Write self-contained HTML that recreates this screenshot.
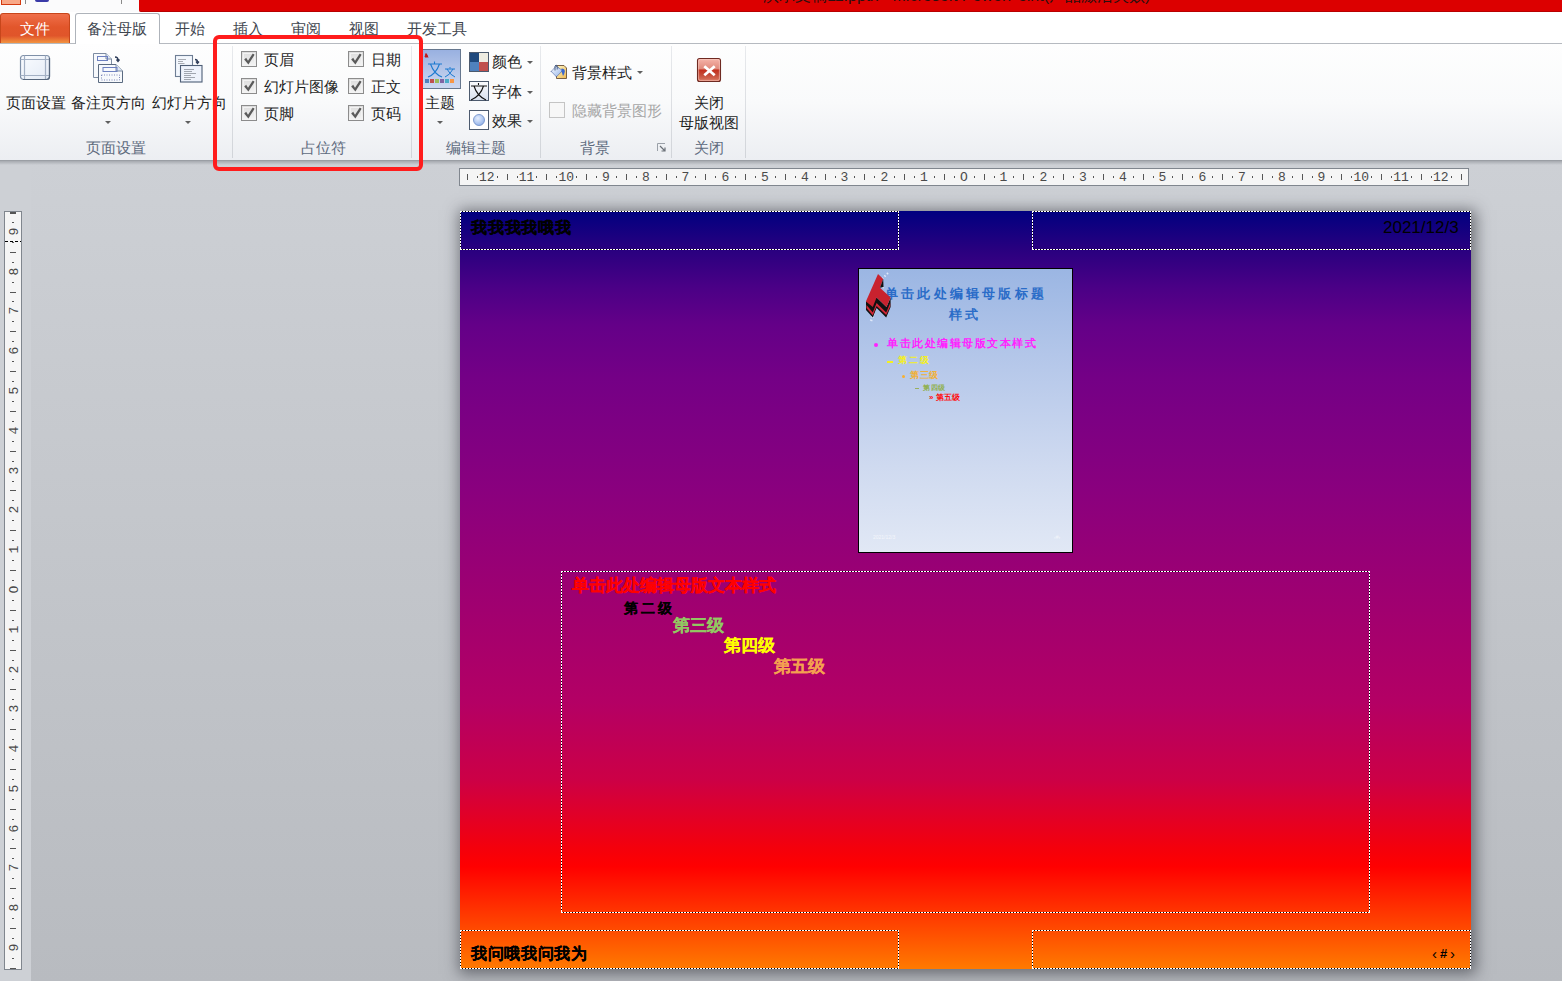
<!DOCTYPE html>
<html><head><meta charset="utf-8">
<style>
*{margin:0;padding:0;box-sizing:border-box}
html,body{width:1562px;height:981px;overflow:hidden;background:#cdd0d5;font-family:"Liberation Sans",sans-serif;}
.a{position:absolute}
#titlebar{left:0;top:0;width:1562px;height:12px;background:#fbfbfc}
#redbar{left:139px;top:0;width:1423px;height:12px;background:#dc0000;border-bottom-left-radius:2px;border-bottom:1px solid #b80000;overflow:hidden}
#ttl{position:absolute;left:624px;top:-13px;font-size:16px;color:#2a1010;white-space:nowrap;line-height:18px}
#tabs{left:0;top:12px;width:1562px;height:32px;background:#fff;border-bottom:1px solid #b6bac0}
.tab{position:absolute;top:20px;font-size:15px;color:#40454e;line-height:17px;white-space:nowrap}
#filebtn{left:0;top:13px;width:70px;height:30px;border:1px solid #c7461b;border-bottom:none;border-radius:3px 3px 0 0;background:linear-gradient(#ef6f4a 0%,#e2562b 45%,#e0552a 75%,#f39441 100%);color:#fff;font-size:15px;text-align:center;line-height:30px}
#seltab{left:75px;top:13px;width:85px;height:32px;border:1px solid #aeb3ba;border-bottom:none;border-radius:3px 3px 0 0;background:#fff}
#ribbon{left:0;top:44px;width:1562px;height:116px;background:linear-gradient(#fefefe 0%,#f9fafb 50%,#eceef2 100%);}
#ribbonline{left:0;top:160px;width:1562px;height:1px;background:#9a9ea4}
#ribbonshadow{left:0;top:161px;width:1562px;height:4px;background:linear-gradient(rgba(140,144,150,0.6),rgba(205,208,213,0))}
.sep{position:absolute;top:46px;width:1px;height:112px;background:linear-gradient(#e8eaed,#d1d4d9)}
.glabel{position:absolute;top:139px;font-size:15px;color:#5e6b7e;line-height:17px;white-space:nowrap}
.rl{position:absolute;font-size:15px;color:#1e1e1e;line-height:17px;white-space:nowrap}
.dis{color:#a6a6a6}
.cb{position:absolute;width:16px;height:16px;border:1px solid #8c8c8c;background:linear-gradient(#dcdcdc,#f4f4f4)}
.cb::before{content:"";position:absolute;left:1px;top:1px;right:1px;bottom:1px;border:1px solid #f2f2f2}
.arr{position:absolute;width:0;height:0;border-left:3px solid transparent;border-right:3px solid transparent;border-top:3px solid #5f5f5f}
#redbox{left:213px;top:35px;width:210px;height:136px;border:4px solid #ff1c1c;border-radius:6px}
#ws2{left:31px;top:161px;width:1531px;height:820px;background:linear-gradient(#cdd0d5,#b8bbc0)}
/* rulers */
#hruler{left:459px;top:168px;width:1010px;height:18px;border:1px solid #80868e;background:#f5f5f5}
#vruler{left:4px;top:211px;width:18px;height:759px;border:1px solid #80868e;background:#f5f5f5}
.rn{position:absolute;font-family:"Liberation Mono",monospace;font-size:13px;color:#4a4a4a;line-height:13px;}
.vrn{transform:rotate(-90deg)}
.tk{background:#555}
/* slide */
#slide{left:460px;top:211px;width:1011px;height:758px;box-shadow:2px 2px 14px 3px rgba(50,52,60,0.6);
background:linear-gradient(#000080 0%,#28007f 5%,#4a0086 10%,#640088 15%,#740086 22%,#8a007e 37%,#a00070 52%,#b40064 65%,#cc0046 75%,#f4000c 84%,#ff0000 86.5%,#ff3a00 93%,#ff7a00 100%)}
.ph{position:absolute}
.ph svg{position:absolute;left:0;top:0;overflow:visible}
.dbox{position:absolute;background:repeating-linear-gradient(90deg,#fff 0 2px,#000 2px 3px) top/100% 1px no-repeat,repeating-linear-gradient(90deg,#fff 0 2px,#000 2px 3px) bottom/100% 1px no-repeat,repeating-linear-gradient(180deg,#fff 0 2px,#000 2px 3px) left/1px 100% no-repeat,repeating-linear-gradient(180deg,#fff 0 2px,#000 2px 3px) right/1px 100% no-repeat}
.tt{position:absolute;white-space:nowrap;line-height:1}
.stx{position:absolute;white-space:nowrap;font-weight:bold;line-height:20px;-webkit-text-stroke:0.3px currentColor}
</style></head><body>
<div id="ws2" class="a"></div>
<div id="titlebar" class="a"></div>
<div id="redbar" class="a"><div id="ttl">演示文稿11.pptx - Microsoft PowerPoint(产品激活失败)</div></div>
<!-- QAT -->
<div class="a" style="left:1px;top:0;width:20px;height:5px;background:#f8a888;border:1px solid #d43a10;border-top:none"></div>
<div class="a" style="left:25px;top:0;width:1px;height:4px;background:#8a8a8a"></div>
<div class="a" style="left:35px;top:0;width:14px;height:2px;background:#3a3aa8;border-radius:0 0 2px 2px"></div>
<div class="a" style="left:121px;top:0;width:1px;height:4px;background:#8a8a8a"></div>

<div id="tabs" class="a"></div>
<div id="filebtn" class="a">文件</div>
<div id="seltab" class="a"></div>
<div class="tab" style="left:87px">备注母版</div>
<div class="tab" style="left:175px">开始</div>
<div class="tab" style="left:233px">插入</div>
<div class="tab" style="left:291px">审阅</div>
<div class="tab" style="left:349px">视图</div>
<div class="tab" style="left:407px">开发工具</div>
<div id="ribbon" class="a"></div>
<div id="ribbonline" class="a"></div>
<div id="ribbonshadow" class="a"></div>

<div class="sep" style="left:232px"></div>
<div class="sep" style="left:411px"></div>
<div class="sep" style="left:540px"></div>
<div class="sep" style="left:671px"></div>
<div class="sep" style="left:745px"></div>

<div class="glabel" style="left:86px">页面设置</div>
<div class="glabel" style="left:301px">占位符</div>
<div class="glabel" style="left:446px">编辑主题</div>
<div class="glabel" style="left:580px">背景</div>
<div class="glabel" style="left:694px">关闭</div>

<!-- page setup group -->
<svg class="a" style="left:18px;top:53px" width="36" height="30" viewBox="0 0 36 30">
 <defs><linearGradient id="g1" x1="0" y1="0" x2="1" y2="1"><stop offset="0" stop-color="#fafcff"/><stop offset="1" stop-color="#e4ebf6"/></linearGradient></defs>
 <rect x="2.5" y="2.5" width="29" height="24" rx="3" fill="url(#g1)" stroke="#7f90a8" stroke-width="1.2"/>
 <path d="M6.5 2.5V26.5M27.5 2.5V26.5M2.5 6.5H31.5M2.5 22.5H31.5" stroke="#a3b0c4" stroke-width="1.2"/>
 <path d="M31.5 5V23.5Q31.5 26.5 28.5 26.5H5" stroke="#56667c" stroke-width="1.2" fill="none"/>
</svg>
<svg class="a" style="left:90px;top:50px" width="36" height="36" viewBox="0 0 36 36">
 <path d="M3.5 3.5H16L21.5 9V27.5H3.5Z" fill="#f7f9fc" stroke="#7d8ca2"/>
 <path d="M16 3.5V9H21.5" fill="#dfe8f6" stroke="#7d8ca2"/>
 <rect x="7.5" y="6.5" width="10" height="4" fill="none" stroke="#6d80c0"/>
 <path d="M25 7Q28 7 28 10M26.5 9.5L28 11.5L29.5 9.5" stroke="#2d3c58" stroke-width="1.3" fill="none"/>
 <path d="M8.5 14.5H26L32.5 21V32.5H8.5Z" fill="#f7f9fc" stroke="#5a6a80"/>
 <path d="M26 14.5V21H32.5" fill="#dfe8f6" stroke="#7d8ca2"/>
 <rect x="13" y="17.5" width="14" height="4" fill="none" stroke="#6d80c0"/>
 <rect x="11.5" y="25" width="18" height="5" fill="none" stroke="#7a86b8" stroke-dasharray="1 1.5"/>
</svg>
<svg class="a" style="left:172px;top:52px" width="34" height="34" viewBox="0 0 34 34">
 <rect x="3.5" y="3.5" width="17" height="21" fill="#f3f7fd" stroke="#6e7e94" stroke-width="1.1"/>
 <path d="M6 7.5H14M6 9.5H11M6 11.5H12.5" stroke="#a8acb4"/>
 <path d="M23 7.5Q25.5 7.5 25.5 10M24 9.5L25.5 11.5L27 9.5" stroke="#2d3c58" stroke-width="1.3" fill="none"/>
 <rect x="8.5" y="13.5" width="21.5" height="16.5" fill="#eef3fc" stroke="#4e5e76" stroke-width="1.1"/>
 <path d="M12 17.5H22M12 19.5H20M12 21.5H24M12 23.5H19M12 25.5H23M12 27.5H19" stroke="#a0a6b0"/>
</svg>
<div class="rl" style="left:6px;top:94px">页面设置</div>
<div class="rl" style="left:71px;top:94px">备注页方向</div>
<div class="rl" style="left:152px;top:94px">幻灯片方向</div>
<div class="arr" style="left:105px;top:121px"></div>
<div class="arr" style="left:185px;top:121px"></div>

<!-- placeholders group -->
<div class="cb" style="left:241px;top:51px"></div>
<div class="cb" style="left:241px;top:78px"></div>
<div class="cb" style="left:241px;top:105px"></div>
<div class="cb" style="left:348px;top:51px"></div>
<div class="cb" style="left:348px;top:78px"></div>
<div class="cb" style="left:348px;top:105px"></div>
<svg class="a" style="left:241px;top:51px" width="125" height="72" viewBox="0 0 125 72">
 <g fill="#5a5a5a">
 <path transform="translate(0 0)" d="M3.2 8.4L5.2 6.8L7 9.8L11.8 2.6L13.6 3.8L7.4 13.4Z"/>
 <path transform="translate(0 27)" d="M3.2 8.4L5.2 6.8L7 9.8L11.8 2.6L13.6 3.8L7.4 13.4Z"/>
 <path transform="translate(0 54)" d="M3.2 8.4L5.2 6.8L7 9.8L11.8 2.6L13.6 3.8L7.4 13.4Z"/>
 <path transform="translate(107 0)" d="M3.2 8.4L5.2 6.8L7 9.8L11.8 2.6L13.6 3.8L7.4 13.4Z"/>
 <path transform="translate(107 27)" d="M3.2 8.4L5.2 6.8L7 9.8L11.8 2.6L13.6 3.8L7.4 13.4Z"/>
 <path transform="translate(107 54)" d="M3.2 8.4L5.2 6.8L7 9.8L11.8 2.6L13.6 3.8L7.4 13.4Z"/>
 </g>
</svg>
<div class="rl" style="left:264px;top:51px">页眉</div>
<div class="rl" style="left:264px;top:78px">幻灯片图像</div>
<div class="rl" style="left:264px;top:105px">页脚</div>
<div class="rl" style="left:371px;top:51px">日期</div>
<div class="rl" style="left:371px;top:78px">正文</div>
<div class="rl" style="left:371px;top:105px">页码</div>

<!-- edit theme group -->
<svg class="a" style="left:421px;top:48px" width="42" height="42" viewBox="0 0 42 42">
 <defs><linearGradient id="g2" x1="0" y1="0" x2="0" y2="1"><stop offset="0" stop-color="#98b0e0"/><stop offset="1" stop-color="#cdd8f0"/></linearGradient></defs>
 <rect x="1.5" y="1.5" width="38" height="39" fill="url(#g2)" stroke="#66778e"/>
 <path d="M4 9L5 5.5L6.5 9ZM5.5 6L7 9.5" fill="#c01818" stroke="#c01818" stroke-width="1"/>
 <path d="M13.5 13.5V15.5M7 16H21M9.5 16Q13 26 21 29M18.5 16Q15 26 7 29" stroke="#1c7ad0" stroke-width="1.1" fill="none"/>
 <path d="M29 19V20.5M24 21H34M26 21Q29 27 34 29M32 21Q29 27 24 29" stroke="#1c7ad0" stroke-width="1" fill="none"/>
 <rect x="4" y="31" width="4" height="4" fill="#4f81bd"/><rect x="9" y="31" width="4" height="4" fill="#c0504d"/>
 <rect x="14" y="31" width="4" height="4" fill="#9bbb59"/><rect x="19" y="31" width="4" height="4" fill="#8064a2"/>
 <rect x="24" y="31" width="4" height="4" fill="#4bacc6"/><rect x="29" y="31" width="4" height="4" fill="#f79646"/>
</svg>
<div class="rl" style="left:425px;top:94px">主题</div>
<div class="arr" style="left:437px;top:121px"></div>
<svg class="a" style="left:468px;top:51px" width="22" height="22" viewBox="0 0 22 22">
 <rect x="1.5" y="1.5" width="9.5" height="9.5" fill="#1f497d"/><rect x="11" y="1.5" width="9.5" height="9.5" fill="#eeece1"/>
 <rect x="1.5" y="11" width="9.5" height="9.5" fill="#4f81bd"/><rect x="11" y="11" width="9.5" height="9.5" fill="#c0504d"/>
 <rect x="1.5" y="1.5" width="19" height="19" fill="none" stroke="#4c5a6e"/>
</svg>
<svg class="a" style="left:468px;top:80px" width="22" height="22" viewBox="0 0 22 22">
 <defs><linearGradient id="g3" x1="0" y1="0" x2="0" y2="1"><stop offset="0" stop-color="#fbfcfe"/><stop offset="1" stop-color="#d8e0ee"/></linearGradient></defs>
 <rect x="1.5" y="1.5" width="19" height="19" fill="url(#g3)" stroke="#4c5a6e"/>
 <path d="M10.5 3V5M3 6H19M6 6Q9 16 18 20M15.5 6Q12.5 16 3 20" stroke="#111" stroke-width="1.1" fill="none"/>
</svg>
<svg class="a" style="left:468px;top:109px" width="22" height="22" viewBox="0 0 22 22">
 <defs><radialGradient id="g4" cx="0.4" cy="0.35" r="0.7"><stop offset="0" stop-color="#e6efff"/><stop offset="1" stop-color="#8fb0e8"/></radialGradient></defs>
 <rect x="1.5" y="1.5" width="19" height="19" fill="#fff" stroke="#4c5a6e"/>
 <circle cx="11" cy="11" r="5.5" fill="url(#g4)" stroke="#6b8cc8" stroke-width="0.8"/>
</svg>
<div class="rl" style="left:492px;top:53px">颜色</div>
<div class="rl" style="left:492px;top:83px">字体</div>
<div class="rl" style="left:492px;top:112px">效果</div>
<div class="arr" style="left:527px;top:61px"></div>
<div class="arr" style="left:527px;top:91px"></div>
<div class="arr" style="left:527px;top:120px"></div>

<!-- background group -->
<svg class="a" style="left:545px;top:58px" width="30" height="26" viewBox="0 0 30 26">
 <defs><linearGradient id="g6" x1="0" y1="0" x2="1" y2="1"><stop offset="0" stop-color="#fff8c8"/><stop offset="1" stop-color="#eeb850"/></linearGradient>
 <linearGradient id="g7" x1="0" y1="0" x2="1" y2="1"><stop offset="0" stop-color="#ffffff"/><stop offset="1" stop-color="#8fb0e8"/></linearGradient></defs>
 <path d="M11.5 7.5H19L21.5 10V20.5H11.5Z" fill="url(#g6)" stroke="#6a5038" stroke-width="0.9"/>
 <path d="M6.2 13.4L11.2 8.2L17.6 12.6L11.4 18.8Z" fill="url(#g7)" stroke="#2c4890" stroke-width="0.9" stroke-dasharray="1 0.6"/>
 <path d="M10 12.5V8Q11 6 12.2 8V11.5" stroke="#4a6088" stroke-width="1" fill="none"/>
 <path d="M16.5 10.5Q20 10.5 19.8 13.5Q19.5 16 18 18Q17 15 16.5 13Z" fill="#3a68d0"/>
</svg>
<div class="rl" style="left:572px;top:64px">背景样式</div>
<div class="arr" style="left:637px;top:71px"></div>
<div class="a" style="left:549px;top:102px;width:16px;height:16px;border:1px solid #c4c4c4;background:#f7f7f7"></div>
<div class="rl dis" style="left:572px;top:102px">隐藏背景图形</div>
<svg class="a" style="left:656px;top:142px" width="11" height="11" viewBox="0 0 11 11">
 <path d="M1.5 9V1.5H9" stroke="#9aa0a8" fill="none"/><path d="M4 4L9 9M9 5.5V9H5.5" stroke="#6a7078" fill="none" stroke-width="1.2"/>
</svg>

<!-- close group -->
<svg class="a" style="left:696px;top:57px" width="26" height="26" viewBox="0 0 26 26">
 <defs><linearGradient id="g5" x1="0" y1="0" x2="0" y2="1"><stop offset="0" stop-color="#f6b4aa"/><stop offset="0.45" stop-color="#e08a7c"/><stop offset="0.5" stop-color="#c42e1c"/><stop offset="0.7" stop-color="#c44a36"/><stop offset="1" stop-color="#da7a62"/></linearGradient></defs>
 <rect x="1.5" y="1.5" width="23" height="23" rx="2" fill="url(#g5)" stroke="#6e2a22" stroke-width="1.1"/>
 <rect x="2.6" y="2.6" width="20.8" height="20.8" rx="1.5" fill="none" stroke="#fbd0c8" stroke-width="0.7" opacity="0.8"/>
 <path d="M8.3 9.3L18.7 18.2M18.7 9.3L8.3 18.2" stroke="#fff" stroke-width="2.8"/>
</svg>
<div class="rl" style="left:694px;top:94px">关闭</div>
<div class="rl" style="left:679px;top:114px">母版视图</div>

<div id="redbox" class="a"></div>

<!-- rulers -->
<div id="hruler" class="a"></div>
<div id="vruler" class="a"></div>
<div class="a" style="left:10px;top:212px;width:6px;height:2px;background:#555"></div>
<div class="a" style="left:5px;top:241px;width:16px;height:1px;background:repeating-linear-gradient(90deg,#000 0 3px,transparent 3px 5px)"></div>
<div class="rn" style="left:466.8px;top:171px;width:40px;text-align:center">12</div>
<div class="rn" style="left:506.5px;top:171px;width:40px;text-align:center">11</div>
<div class="rn" style="left:546.3px;top:171px;width:40px;text-align:center">10</div>
<div class="rn" style="left:586.0px;top:171px;width:40px;text-align:center">9</div>
<div class="rn" style="left:625.8px;top:171px;width:40px;text-align:center">8</div>
<div class="rn" style="left:665.5px;top:171px;width:40px;text-align:center">7</div>
<div class="rn" style="left:705.3px;top:171px;width:40px;text-align:center">6</div>
<div class="rn" style="left:745.0px;top:171px;width:40px;text-align:center">5</div>
<div class="rn" style="left:784.8px;top:171px;width:40px;text-align:center">4</div>
<div class="rn" style="left:824.5px;top:171px;width:40px;text-align:center">3</div>
<div class="rn" style="left:864.3px;top:171px;width:40px;text-align:center">2</div>
<div class="rn" style="left:904.0px;top:171px;width:40px;text-align:center">1</div>
<div class="rn" style="left:943.8px;top:171px;width:40px;text-align:center">O</div>
<div class="rn" style="left:983.5px;top:171px;width:40px;text-align:center">1</div>
<div class="rn" style="left:1023.3px;top:171px;width:40px;text-align:center">2</div>
<div class="rn" style="left:1063.0px;top:171px;width:40px;text-align:center">3</div>
<div class="rn" style="left:1102.8px;top:171px;width:40px;text-align:center">4</div>
<div class="rn" style="left:1142.5px;top:171px;width:40px;text-align:center">5</div>
<div class="rn" style="left:1182.3px;top:171px;width:40px;text-align:center">6</div>
<div class="rn" style="left:1222.0px;top:171px;width:40px;text-align:center">7</div>
<div class="rn" style="left:1261.8px;top:171px;width:40px;text-align:center">8</div>
<div class="rn" style="left:1301.5px;top:171px;width:40px;text-align:center">9</div>
<div class="rn" style="left:1341.3px;top:171px;width:40px;text-align:center">10</div>
<div class="rn" style="left:1381.0px;top:171px;width:40px;text-align:center">11</div>
<div class="rn" style="left:1420.8px;top:171px;width:40px;text-align:center">12</div>
<div class="a tk" style="left:467px;top:174px;width:1px;height:6px"></div>
<div class="a tk" style="left:507px;top:174px;width:1px;height:6px"></div>
<div class="a tk" style="left:546px;top:174px;width:1px;height:6px"></div>
<div class="a tk" style="left:586px;top:174px;width:1px;height:6px"></div>
<div class="a tk" style="left:626px;top:174px;width:1px;height:6px"></div>
<div class="a tk" style="left:666px;top:174px;width:1px;height:6px"></div>
<div class="a tk" style="left:705px;top:174px;width:1px;height:6px"></div>
<div class="a tk" style="left:745px;top:174px;width:1px;height:6px"></div>
<div class="a tk" style="left:785px;top:174px;width:1px;height:6px"></div>
<div class="a tk" style="left:825px;top:174px;width:1px;height:6px"></div>
<div class="a tk" style="left:864px;top:174px;width:1px;height:6px"></div>
<div class="a tk" style="left:904px;top:174px;width:1px;height:6px"></div>
<div class="a tk" style="left:944px;top:174px;width:1px;height:6px"></div>
<div class="a tk" style="left:984px;top:174px;width:1px;height:6px"></div>
<div class="a tk" style="left:1023px;top:174px;width:1px;height:6px"></div>
<div class="a tk" style="left:1063px;top:174px;width:1px;height:6px"></div>
<div class="a tk" style="left:1103px;top:174px;width:1px;height:6px"></div>
<div class="a tk" style="left:1143px;top:174px;width:1px;height:6px"></div>
<div class="a tk" style="left:1182px;top:174px;width:1px;height:6px"></div>
<div class="a tk" style="left:1222px;top:174px;width:1px;height:6px"></div>
<div class="a tk" style="left:1262px;top:174px;width:1px;height:6px"></div>
<div class="a tk" style="left:1302px;top:174px;width:1px;height:6px"></div>
<div class="a tk" style="left:1341px;top:174px;width:1px;height:6px"></div>
<div class="a tk" style="left:1381px;top:174px;width:1px;height:6px"></div>
<div class="a tk" style="left:1421px;top:174px;width:1px;height:6px"></div>
<div class="a tk" style="left:1461px;top:174px;width:1px;height:6px"></div>
<div class="a tk" style="left:477px;top:176px;width:1px;height:2px"></div>
<div class="a tk" style="left:497px;top:176px;width:1px;height:2px"></div>
<div class="a tk" style="left:517px;top:176px;width:1px;height:2px"></div>
<div class="a tk" style="left:536px;top:176px;width:1px;height:2px"></div>
<div class="a tk" style="left:556px;top:176px;width:1px;height:2px"></div>
<div class="a tk" style="left:576px;top:176px;width:1px;height:2px"></div>
<div class="a tk" style="left:596px;top:176px;width:1px;height:2px"></div>
<div class="a tk" style="left:616px;top:176px;width:1px;height:2px"></div>
<div class="a tk" style="left:636px;top:176px;width:1px;height:2px"></div>
<div class="a tk" style="left:656px;top:176px;width:1px;height:2px"></div>
<div class="a tk" style="left:676px;top:176px;width:1px;height:2px"></div>
<div class="a tk" style="left:695px;top:176px;width:1px;height:2px"></div>
<div class="a tk" style="left:715px;top:176px;width:1px;height:2px"></div>
<div class="a tk" style="left:735px;top:176px;width:1px;height:2px"></div>
<div class="a tk" style="left:755px;top:176px;width:1px;height:2px"></div>
<div class="a tk" style="left:775px;top:176px;width:1px;height:2px"></div>
<div class="a tk" style="left:795px;top:176px;width:1px;height:2px"></div>
<div class="a tk" style="left:815px;top:176px;width:1px;height:2px"></div>
<div class="a tk" style="left:835px;top:176px;width:1px;height:2px"></div>
<div class="a tk" style="left:854px;top:176px;width:1px;height:2px"></div>
<div class="a tk" style="left:874px;top:176px;width:1px;height:2px"></div>
<div class="a tk" style="left:894px;top:176px;width:1px;height:2px"></div>
<div class="a tk" style="left:914px;top:176px;width:1px;height:2px"></div>
<div class="a tk" style="left:934px;top:176px;width:1px;height:2px"></div>
<div class="a tk" style="left:954px;top:176px;width:1px;height:2px"></div>
<div class="a tk" style="left:974px;top:176px;width:1px;height:2px"></div>
<div class="a tk" style="left:994px;top:176px;width:1px;height:2px"></div>
<div class="a tk" style="left:1013px;top:176px;width:1px;height:2px"></div>
<div class="a tk" style="left:1033px;top:176px;width:1px;height:2px"></div>
<div class="a tk" style="left:1053px;top:176px;width:1px;height:2px"></div>
<div class="a tk" style="left:1073px;top:176px;width:1px;height:2px"></div>
<div class="a tk" style="left:1093px;top:176px;width:1px;height:2px"></div>
<div class="a tk" style="left:1113px;top:176px;width:1px;height:2px"></div>
<div class="a tk" style="left:1133px;top:176px;width:1px;height:2px"></div>
<div class="a tk" style="left:1153px;top:176px;width:1px;height:2px"></div>
<div class="a tk" style="left:1172px;top:176px;width:1px;height:2px"></div>
<div class="a tk" style="left:1192px;top:176px;width:1px;height:2px"></div>
<div class="a tk" style="left:1212px;top:176px;width:1px;height:2px"></div>
<div class="a tk" style="left:1232px;top:176px;width:1px;height:2px"></div>
<div class="a tk" style="left:1252px;top:176px;width:1px;height:2px"></div>
<div class="a tk" style="left:1272px;top:176px;width:1px;height:2px"></div>
<div class="a tk" style="left:1292px;top:176px;width:1px;height:2px"></div>
<div class="a tk" style="left:1312px;top:176px;width:1px;height:2px"></div>
<div class="a tk" style="left:1331px;top:176px;width:1px;height:2px"></div>
<div class="a tk" style="left:1351px;top:176px;width:1px;height:2px"></div>
<div class="a tk" style="left:1371px;top:176px;width:1px;height:2px"></div>
<div class="a tk" style="left:1391px;top:176px;width:1px;height:2px"></div>
<div class="a tk" style="left:1411px;top:176px;width:1px;height:2px"></div>
<div class="a tk" style="left:1431px;top:176px;width:1px;height:2px"></div>
<div class="a tk" style="left:1451px;top:176px;width:1px;height:2px"></div>
<div class="rn vrn" style="left:-5.8px;top:224.9px;width:40px;text-align:center">9</div>
<div class="rn vrn" style="left:-5.8px;top:264.7px;width:40px;text-align:center">8</div>
<div class="rn vrn" style="left:-5.8px;top:304.4px;width:40px;text-align:center">7</div>
<div class="rn vrn" style="left:-5.8px;top:344.2px;width:40px;text-align:center">6</div>
<div class="rn vrn" style="left:-5.8px;top:384.0px;width:40px;text-align:center">5</div>
<div class="rn vrn" style="left:-5.8px;top:423.8px;width:40px;text-align:center">4</div>
<div class="rn vrn" style="left:-5.8px;top:463.6px;width:40px;text-align:center">3</div>
<div class="rn vrn" style="left:-5.8px;top:503.3px;width:40px;text-align:center">2</div>
<div class="rn vrn" style="left:-5.8px;top:543.1px;width:40px;text-align:center">1</div>
<div class="rn vrn" style="left:-5.8px;top:582.9px;width:40px;text-align:center">O</div>
<div class="rn vrn" style="left:-5.8px;top:622.7px;width:40px;text-align:center">1</div>
<div class="rn vrn" style="left:-5.8px;top:662.5px;width:40px;text-align:center">2</div>
<div class="rn vrn" style="left:-5.8px;top:702.2px;width:40px;text-align:center">3</div>
<div class="rn vrn" style="left:-5.8px;top:742.0px;width:40px;text-align:center">4</div>
<div class="rn vrn" style="left:-5.8px;top:781.8px;width:40px;text-align:center">5</div>
<div class="rn vrn" style="left:-5.8px;top:821.6px;width:40px;text-align:center">6</div>
<div class="rn vrn" style="left:-5.8px;top:861.4px;width:40px;text-align:center">7</div>
<div class="rn vrn" style="left:-5.8px;top:901.1px;width:40px;text-align:center">8</div>
<div class="rn vrn" style="left:-5.8px;top:940.9px;width:40px;text-align:center">9</div>
<div class="a tk" style="left:10px;top:252px;width:6px;height:1px"></div>
<div class="a tk" style="left:10px;top:292px;width:6px;height:1px"></div>
<div class="a tk" style="left:10px;top:331px;width:6px;height:1px"></div>
<div class="a tk" style="left:10px;top:371px;width:6px;height:1px"></div>
<div class="a tk" style="left:10px;top:411px;width:6px;height:1px"></div>
<div class="a tk" style="left:10px;top:451px;width:6px;height:1px"></div>
<div class="a tk" style="left:10px;top:490px;width:6px;height:1px"></div>
<div class="a tk" style="left:10px;top:530px;width:6px;height:1px"></div>
<div class="a tk" style="left:10px;top:570px;width:6px;height:1px"></div>
<div class="a tk" style="left:10px;top:610px;width:6px;height:1px"></div>
<div class="a tk" style="left:10px;top:650px;width:6px;height:1px"></div>
<div class="a tk" style="left:10px;top:689px;width:6px;height:1px"></div>
<div class="a tk" style="left:10px;top:729px;width:6px;height:1px"></div>
<div class="a tk" style="left:10px;top:769px;width:6px;height:1px"></div>
<div class="a tk" style="left:10px;top:809px;width:6px;height:1px"></div>
<div class="a tk" style="left:10px;top:848px;width:6px;height:1px"></div>
<div class="a tk" style="left:10px;top:888px;width:6px;height:1px"></div>
<div class="a tk" style="left:10px;top:928px;width:6px;height:1px"></div>
<div class="a tk" style="left:10px;top:968px;width:6px;height:1px"></div>
<div class="a tk" style="left:12px;top:222px;width:2px;height:1px"></div>
<div class="a tk" style="left:12px;top:242px;width:2px;height:1px"></div>
<div class="a tk" style="left:12px;top:262px;width:2px;height:1px"></div>
<div class="a tk" style="left:12px;top:282px;width:2px;height:1px"></div>
<div class="a tk" style="left:12px;top:301px;width:2px;height:1px"></div>
<div class="a tk" style="left:12px;top:321px;width:2px;height:1px"></div>
<div class="a tk" style="left:12px;top:341px;width:2px;height:1px"></div>
<div class="a tk" style="left:12px;top:361px;width:2px;height:1px"></div>
<div class="a tk" style="left:12px;top:381px;width:2px;height:1px"></div>
<div class="a tk" style="left:12px;top:401px;width:2px;height:1px"></div>
<div class="a tk" style="left:12px;top:421px;width:2px;height:1px"></div>
<div class="a tk" style="left:12px;top:441px;width:2px;height:1px"></div>
<div class="a tk" style="left:12px;top:461px;width:2px;height:1px"></div>
<div class="a tk" style="left:12px;top:481px;width:2px;height:1px"></div>
<div class="a tk" style="left:12px;top:500px;width:2px;height:1px"></div>
<div class="a tk" style="left:12px;top:520px;width:2px;height:1px"></div>
<div class="a tk" style="left:12px;top:540px;width:2px;height:1px"></div>
<div class="a tk" style="left:12px;top:560px;width:2px;height:1px"></div>
<div class="a tk" style="left:12px;top:580px;width:2px;height:1px"></div>
<div class="a tk" style="left:12px;top:600px;width:2px;height:1px"></div>
<div class="a tk" style="left:12px;top:620px;width:2px;height:1px"></div>
<div class="a tk" style="left:12px;top:640px;width:2px;height:1px"></div>
<div class="a tk" style="left:12px;top:660px;width:2px;height:1px"></div>
<div class="a tk" style="left:12px;top:679px;width:2px;height:1px"></div>
<div class="a tk" style="left:12px;top:699px;width:2px;height:1px"></div>
<div class="a tk" style="left:12px;top:719px;width:2px;height:1px"></div>
<div class="a tk" style="left:12px;top:739px;width:2px;height:1px"></div>
<div class="a tk" style="left:12px;top:759px;width:2px;height:1px"></div>
<div class="a tk" style="left:12px;top:779px;width:2px;height:1px"></div>
<div class="a tk" style="left:12px;top:799px;width:2px;height:1px"></div>
<div class="a tk" style="left:12px;top:819px;width:2px;height:1px"></div>
<div class="a tk" style="left:12px;top:839px;width:2px;height:1px"></div>
<div class="a tk" style="left:12px;top:858px;width:2px;height:1px"></div>
<div class="a tk" style="left:12px;top:878px;width:2px;height:1px"></div>
<div class="a tk" style="left:12px;top:898px;width:2px;height:1px"></div>
<div class="a tk" style="left:12px;top:918px;width:2px;height:1px"></div>
<div class="a tk" style="left:12px;top:938px;width:2px;height:1px"></div>
<div class="a tk" style="left:12px;top:958px;width:2px;height:1px"></div>

<!-- slide -->
<div id="slide" class="a"></div>
<div class="dbox" style="left:460px;top:211px;width:439px;height:39px"></div>
<div class="dbox" style="left:1032px;top:211px;width:439px;height:39px"></div>
<div class="dbox" style="left:460px;top:930px;width:439px;height:39px"></div>
<div class="dbox" style="left:1032px;top:930px;width:439px;height:39px"></div>
<div class="dbox" style="left:561px;top:571px;width:809px;height:342px"></div>
<div class="stx" style="left:471px;top:218px;font-size:16px;letter-spacing:0.8px;color:#000;-webkit-text-stroke:0.15px #000">我我我我哦我</div>
<div class="a" style="left:1383px;top:218px;font-size:17px;color:#000;white-space:nowrap;line-height:20px">2021/12/3</div>
<div class="stx" style="left:471px;top:944px;font-size:16px;letter-spacing:0.7px;color:#000;-webkit-text-stroke:0.15px #000">我问哦我问我为</div>
<div class="a" style="left:1432px;top:945px;font-size:15px;color:#000;white-space:nowrap;line-height:18px">‹</div>
<div class="a" style="left:1440px;top:945px;font-size:13px;color:#000;white-space:nowrap;line-height:18px;font-weight:bold">#</div>
<div class="a" style="left:1450px;top:945px;font-size:15px;color:#000;white-space:nowrap;line-height:18px">›</div>

<!-- thumbnail -->
<div class="a" style="left:858px;top:268px;width:215px;height:285px;border:1.5px solid #000;background:linear-gradient(#9bb6e3 0%,#b3c6e9 30%,#cfdaf0 70%,#e1e8f5 100%);overflow:hidden">
 <div class="tt" style="left:26px;top:18px;font-size:13px;color:#2a6cc8;letter-spacing:3.2px;font-weight:bold">单击此处编辑母版标题</div>
 <div class="tt" style="left:90px;top:39px;font-size:13px;color:#2a6cc8;letter-spacing:3.2px;font-weight:bold">样式</div>
 <svg style="position:absolute;left:0;top:0" width="40" height="55" viewBox="0 0 40 55">
  <path d="M12 52L24 18" stroke="#eef4ff" stroke-width="2.5" stroke-dasharray="1.5 2" opacity="0.8"/>
  <path d="M23 10L30 3" stroke="#eef4ff" stroke-width="2" stroke-dasharray="1.5 2" opacity="0.8"/>
  <path d="M7 32.5L7 41L13.8 48.4L17.6 39L27.2 48.4L31.6 38L31.6 28.6L27.5 38L17.6 28.6Z" fill="#111"/>
  <path d="M7.5 36L13.8 43.5L17.6 34L27.2 43.5L31.2 34L31.2 37.5L27.2 46L17.6 37L13.8 46.5L7.5 39Z" fill="#d42838"/>
  <path d="M19 5L24.2 9.9L21 18.7L31.6 28.6L27.5 38L17.6 28.6L13.8 38L6.9 32.5Z" fill="#c8222e"/>
  <path d="M24.2 9.9L24.5 18L21 18.7Z" fill="#111"/>
 </svg>
 <div class="a" style="left:15px;top:74px;width:4px;height:4px;border-radius:2px;background:#ff20ff"></div>
 <div class="tt" style="left:28px;top:69px;font-size:11px;color:#ff22ff;letter-spacing:1.5px;font-weight:bold">单击此处编辑母版文本样式</div>
 <div class="a" style="left:28px;top:92px;width:6px;height:1.5px;background:#f4f020"></div>
 <div class="tt" style="left:39px;top:87px;font-size:9px;color:#f4f020;letter-spacing:2px;font-weight:bold">第二级</div>
 <div class="a" style="left:43px;top:106px;width:3px;height:3px;border-radius:2px;background:#f8b030"></div>
 <div class="tt" style="left:51px;top:102px;font-size:9px;color:#f0b038;letter-spacing:0.5px;font-weight:bold">第三级</div>
 <div class="a" style="left:56px;top:119px;width:4px;height:1px;background:#98b060"></div>
 <div class="tt" style="left:64px;top:115px;font-size:7px;color:#90b050;letter-spacing:0.5px;font-weight:bold">第四级</div>
 <div class="tt" style="left:70px;top:125px;font-size:8px;color:#ff1010;font-weight:bold">»</div>
 <div class="tt" style="left:77px;top:125px;font-size:8px;color:#ff1010;letter-spacing:0px;font-weight:bold">第五级</div>
 <div class="tt" style="left:14px;top:266px;font-size:5px;color:#f4f6fb">2021/12/3</div>
 <div class="tt" style="left:195px;top:266px;font-size:5px;color:#f4f6fb">‹#›</div>
</div>

<!-- body text -->
<div class="stx" style="left:572px;top:576px;font-size:17px;color:#ff0000">单击此处编辑母版文本样式</div>
<div class="stx" style="left:624px;top:598px;font-size:14px;color:#000;letter-spacing:3px;font-weight:bold;-webkit-text-stroke:0.2px #000">第二级</div>
<div class="stx" style="left:673px;top:616px;font-size:17px;-webkit-text-stroke:0.15px currentColor;color:#92c862">第三级</div>
<div class="stx" style="left:724px;top:636px;font-size:17px;-webkit-text-stroke:0.15px currentColor;color:#ffff00">第四级</div>
<div class="stx" style="left:774px;top:657px;font-size:17px;-webkit-text-stroke:0.15px currentColor;color:#f4a050">第五级</div>
</body></html>
